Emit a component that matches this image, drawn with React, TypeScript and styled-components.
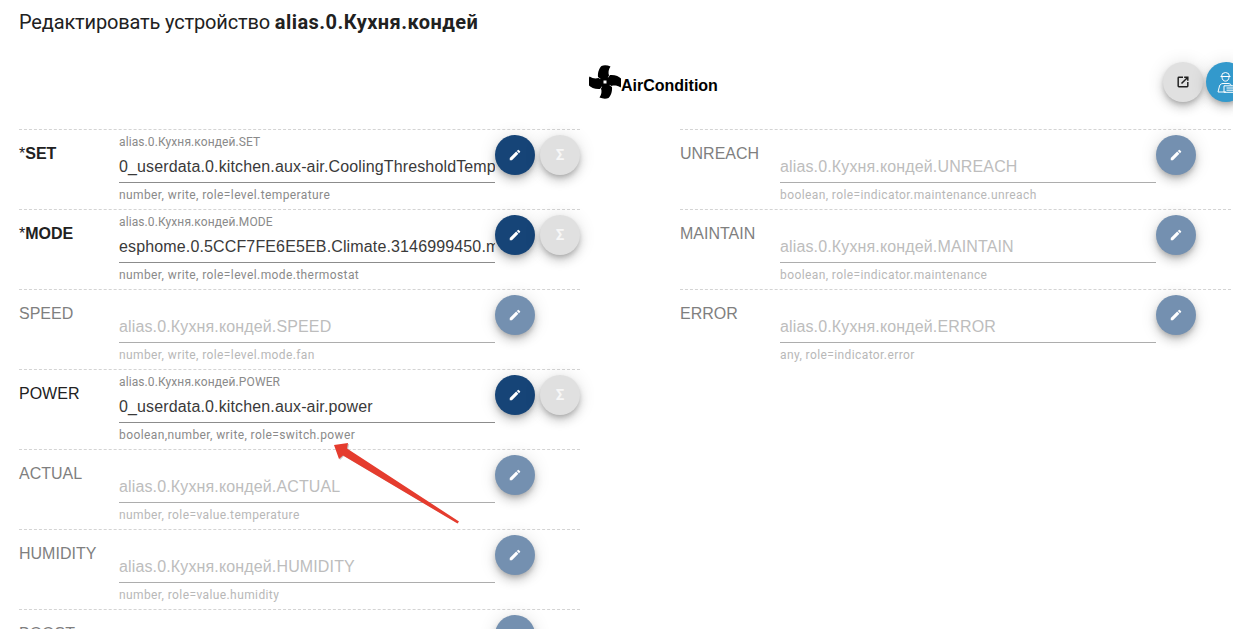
import * as React from 'react';
import styled, { createGlobalStyle } from 'styled-components';

const GlobalStyle = createGlobalStyle`
    html, body {
        margin: 0;
        height: 100%;
        overflow: hidden;
        background: #fff;
        font-family: Roboto, "Liberation Sans", sans-serif;
    }
`;

const Page = styled.div`
    position: relative;
    width: 1233px;
    height: 629px;
    overflow: hidden;
    padding: 12px 0 0 19px;
    box-sizing: border-box;
`;

const Title = styled.h1`
    margin: 0;
    font-size: 20px;
    line-height: 20px;
    font-weight: 400;
    letter-spacing: -0.16px;
    color: #212121;

    b {
        font-weight: 700;
        letter-spacing: 0.45px;
    }
`;

const DeviceHeader = styled.div`
    display: flex;
    align-items: center;
    width: 1227px;
    height: 40px;
    margin-top: 30px;
    padding-left: 570px;
    box-sizing: border-box;
`;

const DeviceName = styled.span`
    margin-top: 7px;
    font-family: "Liberation Sans", Arial, sans-serif;
    font-size: 16px;
    font-weight: 700;
    color: #000;
`;

const HeaderButtons = styled.div`
    display: flex;
    gap: 3px;
    margin-left: auto;
`;

const Columns = styled.div`
    display: flex;
    gap: 100px;
    margin-top: 27px;
`;

const Column = styled.div<{ $width: number }>`
    width: ${(p) => p.$width}px;
    flex: none;
`;

const Row = styled.div`
    display: flex;
    height: 80px;
    box-sizing: border-box;
    border-top: 1px dashed #d4d4d4;
`;

const Name = styled.div<{ $state: 'required' | 'set' | 'empty' }>`
    width: 100px;
    flex: none;
    padding-top: 14px;
    font-family: "Liberation Sans", Arial, sans-serif;
    font-size: 16px;
    line-height: 19px;
    font-weight: ${(p) => (p.$state === 'required' ? 700 : 400)};
    color: ${(p) => (p.$state === 'empty' ? '#7f7f7f' : '#212121')};
`;

const Asterisk = styled.span`
    font-weight: 400;
`;

const Field = styled.div`
    width: 376px;
    flex: none;
`;

const FieldLabel = styled.div`
    height: 12px;
    margin-top: 6px;
    font-size: 12px;
    line-height: 12px;
    letter-spacing: 0.1px;
    color: #8a8a8a;
`;

const FieldValue = styled.div<{ $empty: boolean }>`
    height: 31px;
    margin-top: 4px;
    box-sizing: border-box;
    padding-top: 5px;
    border-bottom: 1px solid ${(p) => (p.$empty ? '#adadad' : '#8c8c8c')};
    font-family: "Liberation Sans", Arial, sans-serif;
    font-size: 16px;
    line-height: 19px;
    letter-spacing: 0.14px;
    white-space: nowrap;
    overflow: hidden;
    color: ${(p) => (p.$empty ? '#bdbdbd' : '#3a3a3a')};
`;

const FieldHint = styled.div<{ $empty: boolean }>`
    margin-top: 5px;
    font-size: 12px;
    line-height: 14px;
    letter-spacing: 0.4px;
    color: ${(p) => (p.$empty ? '#b8b8b8' : '#8a8a8a')};
`;

const EmptySlot = styled.div`
    height: 12px;
    margin-top: 6px;
`;

const Buttons = styled.div`
    display: flex;
    gap: 5px;
    padding-top: 5px;
`;

const Fab = styled.div<{ $color: string }>`
    width: 40px;
    height: 40px;
    flex: none;
    border-radius: 50%;
    display: flex;
    align-items: center;
    justify-content: center;
    background: ${(p) => p.$color};
    box-shadow: 0 3px 5px -1px rgba(0, 0, 0, 0.2), 0 6px 10px 0 rgba(0, 0, 0, 0.14),
        0 1px 18px 0 rgba(0, 0, 0, 0.12);
`;

const Sigma = styled.span`
    font-size: 15px;
    font-weight: 700;
    line-height: 1;
    color: #f7f7f7;
`;

const ArrowLayer = styled.svg`
    position: absolute;
    left: 0;
    top: 0;
    pointer-events: none;
`;

const Pencil = () => (
    <svg width="14" height="14" viewBox="0 0 24 24" fill="#fff">
        <path d="M3 17.25V21h3.75L17.81 9.94l-3.75-3.75L3 17.25zM20.71 7.04a1 1 0 0 0 0-1.41l-2.34-2.34a1 1 0 0 0-1.41 0l-1.83 1.83 3.75 3.75 1.83-1.83z" />
    </svg>
);

const OpenIcon = () => (
    <svg width="14" height="14" viewBox="0 0 24 24" fill="#1f1f1f">
        <path d="M19 19H5V5h7V2.5H5A2.5 2.5 0 0 0 2.5 5v14A2.5 2.5 0 0 0 5 21.500h14a2.500 2.500 0 0 0 2.500-2.500v-7H19v7zM14 2.500V5h3.200l-8.700 8.700 1.800 1.800L19 6.800V10h2.500V2.500H14z" />
    </svg>
);

const WorkerIcon = () => (
    <svg width="24" height="24" viewBox="0 0 24 24" fill="none" stroke="#fff" strokeWidth="1">
        <path d="M7.500 6.500a4 4 0 0 1 8 0" />
        <path d="M6.500 6.500h10" />
        <path d="M8 7c0 5.500 7 5.500 7 0" />
        <path d="M4 22l1.500-6c.4-1.500 2-2.500 3.500-2.500h5c1.500 0 3 .8 3.500 2" />
        <path d="M4 22h8" />
        <path d="M10 15.800h12v6.500H10z" />
        <path d="M12.500 18h7M12.500 20.200h7" />
    </svg>
);

const BLADE = 'M-7 -5C-7.500 -10 -5.500 -14 -3.500 -16C-1 -17 2.500 -16.800 5.500 -15.500C3.500 -12.500 3 -9.500 4 -6.500L0 0Z';

const FanIcon = () => (
    <svg width="32" height="34" viewBox="-16 -17 32 34" fill="#000">
        {[0, 90, 180, 270].map((a) => (
            <path key={a} d={BLADE} transform={`rotate(${a})`} />
        ))}
        <circle r="5.500" />
        <rect x="-1.500" y="-1.500" width="3" height="3" fill="#fff" />
    </svg>
);

interface IField {
    name: string;
    required?: boolean;
    value?: string;
    hint: string;
}

const left: IField[] = [
    { name: 'SET', required: true, value: '0_userdata.0.kitchen.aux-air.CoolingThresholdTemperature', hint: 'number, write, role=level.temperature' },
    { name: 'MODE', required: true, value: 'esphome.0.5CCF7FE6E5EB.Climate.3146999450.mode', hint: 'number, write, role=level.mode.thermostat' },
    { name: 'SPEED', hint: 'number, write, role=level.mode.fan' },
    { name: 'POWER', value: '0_userdata.0.kitchen.aux-air.power', hint: 'boolean,number, write, role=switch.power' },
    { name: 'ACTUAL', hint: 'number, role=value.temperature' },
    { name: 'HUMIDITY', hint: 'number, role=value.humidity' },
    { name: 'BOOST', hint: 'boolean, write, role=switch.boost' },
];

const right: IField[] = [
    { name: 'UNREACH', hint: 'boolean, role=indicator.maintenance.unreach' },
    { name: 'MAINTAIN', hint: 'boolean, role=indicator.maintenance' },
    { name: 'ERROR', hint: 'any, role=indicator.error' },
];

const PREFIX = 'alias.0.Кухня.кондей.';

const FieldRow: React.FunctionComponent<{ field: IField }> = ({ field }) => {
    const { name, required, value, hint } = field;
    const state = required ? 'required' : value ? 'set' : 'empty';

    return (
        <Row>
            <Name $state={state}>
                {required && <Asterisk>*</Asterisk>}
                {name}
            </Name>
            <Field>
                {value ? <FieldLabel>{PREFIX + name}</FieldLabel> : <EmptySlot />}
                <FieldValue $empty={!value}>{value || PREFIX + name}</FieldValue>
                <FieldHint $empty={!value}>{hint}</FieldHint>
            </Field>
            <Buttons>
                <Fab $color={value ? '#164477' : '#7490b0'}>
                    <Pencil />
                </Fab>
                {value && (
                    <Fab $color="#e0e0e0">
                        <Sigma>Σ</Sigma>
                    </Fab>
                )}
            </Buttons>
        </Row>
    );
};

const App: React.FunctionComponent = () => (
    <Page>
        <GlobalStyle />
        <Title>
            Редактировать устройство <b>alias.0.Кухня.кондей</b>
        </Title>
        <DeviceHeader>
            <FanIcon />
            <DeviceName>AirCondition</DeviceName>
            <HeaderButtons>
                <Fab $color="#e0e0e0">
                    <OpenIcon />
                </Fab>
                <Fab $color="#3399cc">
                    <WorkerIcon />
                </Fab>
            </HeaderButtons>
        </DeviceHeader>
        <Columns>
            <Column $width={561}>
                {left.map((f) => (
                    <FieldRow key={f.name} field={f} />
                ))}
            </Column>
            <Column $width={551}>
                {right.map((f) => (
                    <FieldRow key={f.name} field={f} />
                ))}
            </Column>
        </Columns>
        <ArrowLayer width="1233" height="629">
            <polygon
                points="335,446 349,444 348,450 459,524 344,456 340,460"
                fill="#999"
                opacity="0.55"
            />
            <polygon points="334,445 348,443 347,448.500 459,521.500 457.500,523.500 343,455.500 339,459" fill="#e53c2e" />
        </ArrowLayer>
    </Page>
);

export default App;
